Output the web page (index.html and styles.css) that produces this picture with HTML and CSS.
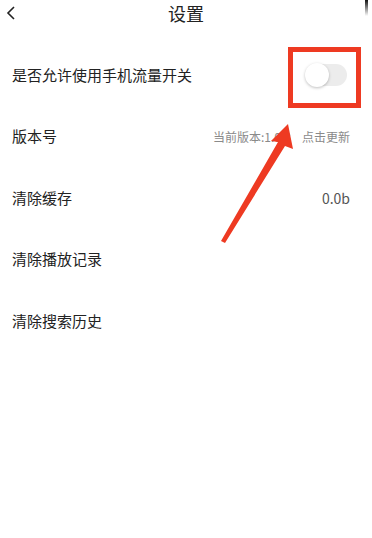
FILE: index.html
```html
<!DOCTYPE html>
<html lang="zh">
<head>
<meta charset="utf-8">
<link rel="stylesheet" href="styles.css">
</head>
<body>
<div class="page">
  <header class="header">
    <svg class="back" width="10" height="16" viewBox="0 0 10 16"><path d="M8 2 L2 8 L8 14" fill="none" stroke="#222" stroke-width="1.6"/></svg>
    <div class="title">设置</div>
  </header>
  <div class="list">
    <div class="row">
      <span class="label">是否允许使用手机流量开关</span>
      <span class="toggle"><span class="knob"></span></span>
    </div>
    <div class="row">
      <span class="label">版本号</span>
      <span class="meta"><span>当前版本:1.0.3</span><span>点击更新</span></span>
    </div>
    <div class="row">
      <span class="label">清除缓存</span>
      <span class="value">0.0b</span>
    </div>
    <div class="row">
      <span class="label">清除播放记录</span>
    </div>
    <div class="row">
      <span class="label">清除搜索历史</span>
    </div>
  </div>
  <div class="highlight"></div>
  <svg class="arrow" width="372" height="538" viewBox="0 0 372 538">
    <polygon points="221,241 278,142 271,141 288,124 293,149 285,146 225,243" fill="#ee3a22"/>
  </svg>
  <div class="edge"></div>
</div>
</body>
</html>
```
FILE: styles.css
```css
html, body {
  margin: 0;
  padding: 0;
  background: #fff;
}
.page {
  position: relative;
  width: 372px;
  height: 538px;
  overflow: hidden;
  font-family: "Noto Sans CJK SC", "Noto Sans", sans-serif;
  color: #222;
}
.header {
  position: relative;
  height: 26px;
  display: flex;
  align-items: center;
  justify-content: center;
}
.back {
  position: absolute;
  left: 6px;
  top: 5px;
}
.title {
  font-size: 18px;
  line-height: 26px;
}
.list {
  padding-top: 18px;
}
.row {
  height: 61.5px;
  display: flex;
  align-items: center;
  justify-content: space-between;
  padding: 0 22px 0 12px;
}
.label {
  font-size: 15px;
  line-height: 20px;
}
.toggle {
  width: 41px;
  height: 22px;
  border-radius: 11px;
  background: #ececec;
  position: relative;
  margin-right: 3px;
}
.knob {
  position: absolute;
  left: -1px;
  top: -1px;
  width: 24px;
  height: 24px;
  border-radius: 50%;
  background: #fff;
  box-shadow: 0 1px 3px rgba(0,0,0,0.25);
}
.meta {
  display: flex;
  gap: 11px;
  font-size: 12px;
  color: #8a8a8a;
}
.value {
  font-size: 14px;
  color: #555;
}
.highlight {
  position: absolute;
  left: 288px;
  top: 47px;
  width: 63px;
  height: 51px;
  border: 5px solid #ee3a22;
}
.arrow {
  position: absolute;
  left: 0;
  top: 0;
}
.edge {
  position: absolute;
  right: 4px;
  top: 0;
  width: 3px;
  height: 16px;
  background: linear-gradient(#111, rgba(0,0,0,0));
}
```
